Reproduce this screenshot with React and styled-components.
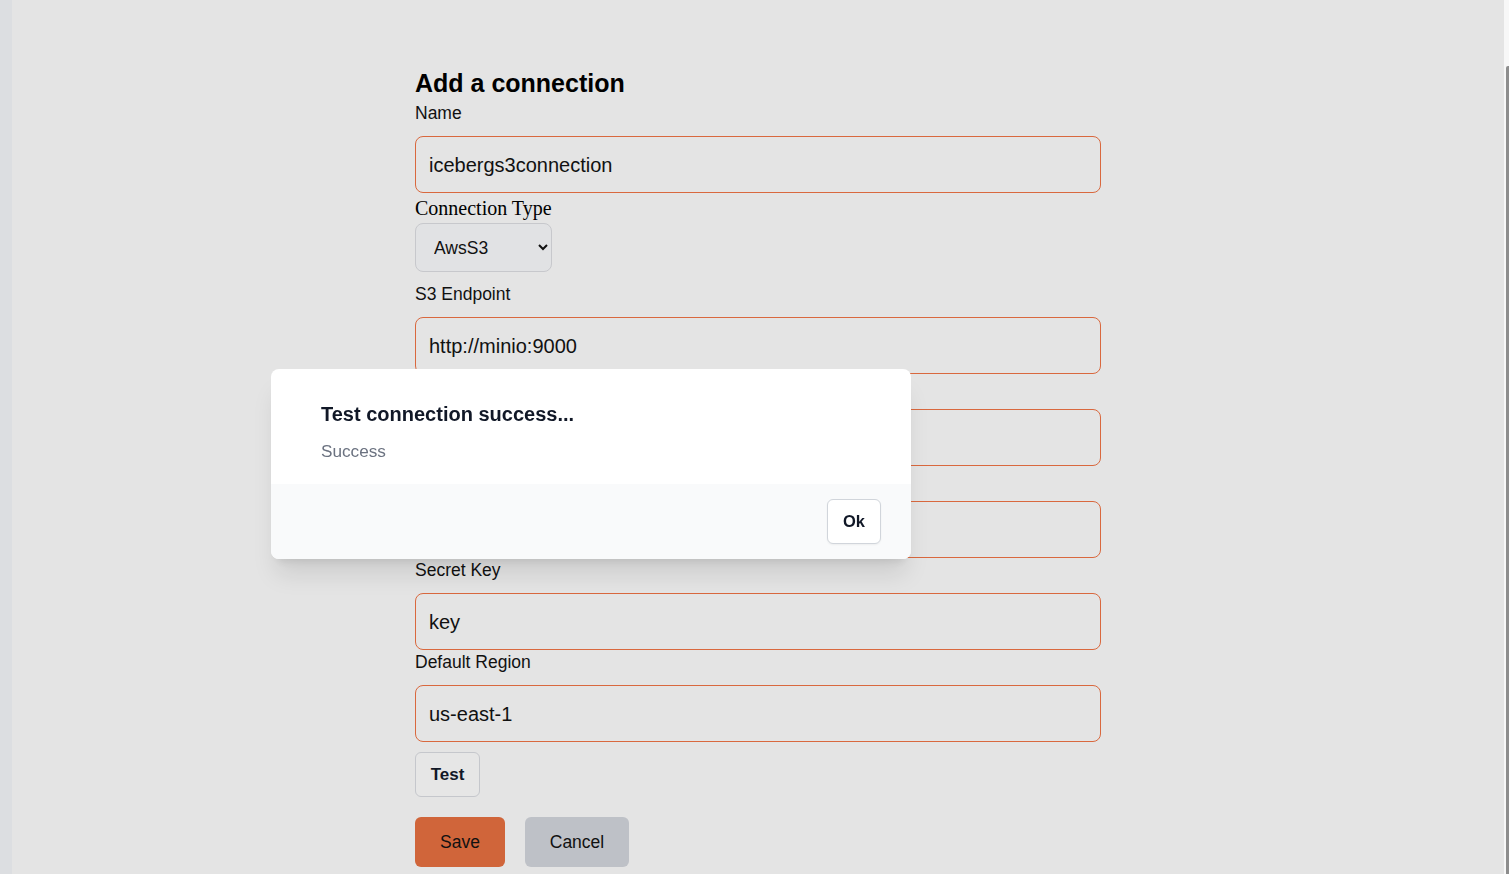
import React from "react";
import styled, { createGlobalStyle } from "styled-components";

const GlobalStyle = createGlobalStyle`
  html, body {
    margin: 0;
    padding: 0;
    background: #e4e4e4;
    overflow: hidden;
  }
  body {
    font-family: "Liberation Sans", Arial, sans-serif;
    color: #111;
  }
  * { box-sizing: border-box; }
`;

const Page = styled.div`
  display: flex;
  height: 100vh;
  width: 100vw;
`;

const LeftStrip = styled.div`
  width: 12px;
  flex: none;
  background: #dcdee1;
`;

const Main = styled.main`
  flex: 1;
  background: #e4e4e4;
  padding-top: 68px;
`;

const ScrollTrack = styled.div`
  width: 5px;
  flex: none;
  background: #f7f7f7;
  padding: 66px 0 0 2px;
  display: flex;
`;

const ScrollThumb = styled.div`
  width: 3px;
  flex: 1;
  background: #8d8d8d;
  border-radius: 2px 0 0 0;
`;

const Form = styled.form`
  width: 686px;
  margin: 0 auto;
  display: flex;
  flex-direction: column;
  align-items: flex-start;
`;

const Heading = styled.h2`
  margin: 0 0 3px;
  font-size: 25px;
  line-height: 30px;
  font-weight: 700;
  color: #000;
`;

const Label = styled.label`
  display: block;
  font-size: 17.5px;
  line-height: 24px;
  color: #111;
  margin-top: ${(p) => p.$top || 0}px;
  margin-bottom: 11px;
`;

const SerifLabel = styled.label`
  display: block;
  font-family: "Liberation Serif", "Times New Roman", serif;
  font-size: 20px;
  line-height: 30px;
  color: #000;
`;

const TextInput = styled.input`
  width: 100%;
  height: 57px;
  border: 1px solid #d9683e;
  border-radius: 8px;
  background: transparent;
  padding: 2px 13px 0;
  font-family: "Liberation Sans", Arial, sans-serif;
  font-size: 20px;
  color: #111;
  outline: none;
`;

const Select = styled.select`
  width: 137px;
  height: 49px;
  border: 1px solid #c7c8cc;
  border-radius: 8px;
  background: #e1e2e4;
  padding: 0 10px 0 14px;
  font-family: "Liberation Sans", Arial, sans-serif;
  font-size: 17.5px;
  color: #111;
  outline: none;
`;

const OutlineButton = styled.button`
  margin-top: 10px;
  width: 65px;
  height: 45px;
  border: 1px solid #c5c7cc;
  border-radius: 6px;
  background: #e6e6e6;
  font-family: "Liberation Sans", Arial, sans-serif;
  font-weight: 700;
  font-size: 17px;
  color: #111827;
  cursor: pointer;
`;

const ButtonRow = styled.div`
  margin-top: 20px;
  display: flex;
  gap: 20px;
`;

const FillButton = styled.button`
  width: ${(p) => p.$w}px;
  height: 50px;
  border: none;
  border-radius: 6px;
  background: ${(p) => p.$bg};
  font-family: "Liberation Sans", Arial, sans-serif;
  font-size: 17.5px;
  color: #111;
  cursor: pointer;
`;

const Dialog = styled.div`
  position: fixed;
  left: 271px;
  top: 369px;
  width: 640px;
  background: #fff;
  border-radius: 8px;
  overflow: hidden;
  box-shadow: 0 20px 25px -5px rgba(0, 0, 0, 0.1),
    0 8px 10px -6px rgba(0, 0, 0, 0.1);
`;

const DialogBody = styled.div`
  padding: 31px 50px 21px;
`;

const DialogTitle = styled.h3`
  margin: 0;
  font-size: 20px;
  line-height: 28px;
  font-weight: 700;
  color: #111827;
`;

const DialogText = styled.p`
  margin: 11px 0 0;
  font-size: 17.2px;
  line-height: 24px;
  color: #6b7280;
`;

const DialogFooter = styled.div`
  background: #f9fafb;
  padding: 15px 30px;
  display: flex;
  justify-content: flex-end;
`;

const OkButton = styled.button`
  width: 54px;
  height: 45px;
  background: #fff;
  border: 1px solid #d1d5db;
  border-radius: 6px;
  box-shadow: 0 1px 2px rgba(0, 0, 0, 0.05);
  font-family: "Liberation Sans", Arial, sans-serif;
  font-weight: 700;
  font-size: 16.5px;
  color: #111827;
  cursor: pointer;
`;

const fields = [
  { label: "S3 Endpoint", value: "http://minio:9000", top: 10 },
  { label: "Bucket", value: "warehouse" },
  { label: "Access Key", value: "admin" },
  { label: "Secret Key", value: "key" },
  { label: "Default Region", value: "us-east-1" },
];

export default function App() {
  return (
    <>
      <GlobalStyle />
      <Page>
        <LeftStrip />
        <Main>
          <Form onSubmit={(e) => e.preventDefault()}>
            <Heading>Add a connection</Heading>
            <Label>Name</Label>
            <TextInput defaultValue="icebergs3connection" />
            <SerifLabel>Connection Type</SerifLabel>
            <Select defaultValue="AwsS3">
              <option value="AwsS3">AwsS3</option>
            </Select>
            {fields.map((f) => (
              <React.Fragment key={f.label}>
                <Label $top={f.top}>{f.label}</Label>
                <TextInput defaultValue={f.value} />
              </React.Fragment>
            ))}
            <OutlineButton type="button">Test</OutlineButton>
            <ButtonRow>
              <FillButton type="button" $w={90} $bg="#d0653a">
                Save
              </FillButton>
              <FillButton type="button" $w={104} $bg="#bec1c7">
                Cancel
              </FillButton>
            </ButtonRow>
          </Form>
        </Main>
        <ScrollTrack>
          <ScrollThumb />
        </ScrollTrack>
      </Page>
      <Dialog role="dialog">
        <DialogBody>
          <DialogTitle>Test connection success...</DialogTitle>
          <DialogText>Success</DialogText>
        </DialogBody>
        <DialogFooter>
          <OkButton type="button">Ok</OkButton>
        </DialogFooter>
      </Dialog>
    </>
  );
}
